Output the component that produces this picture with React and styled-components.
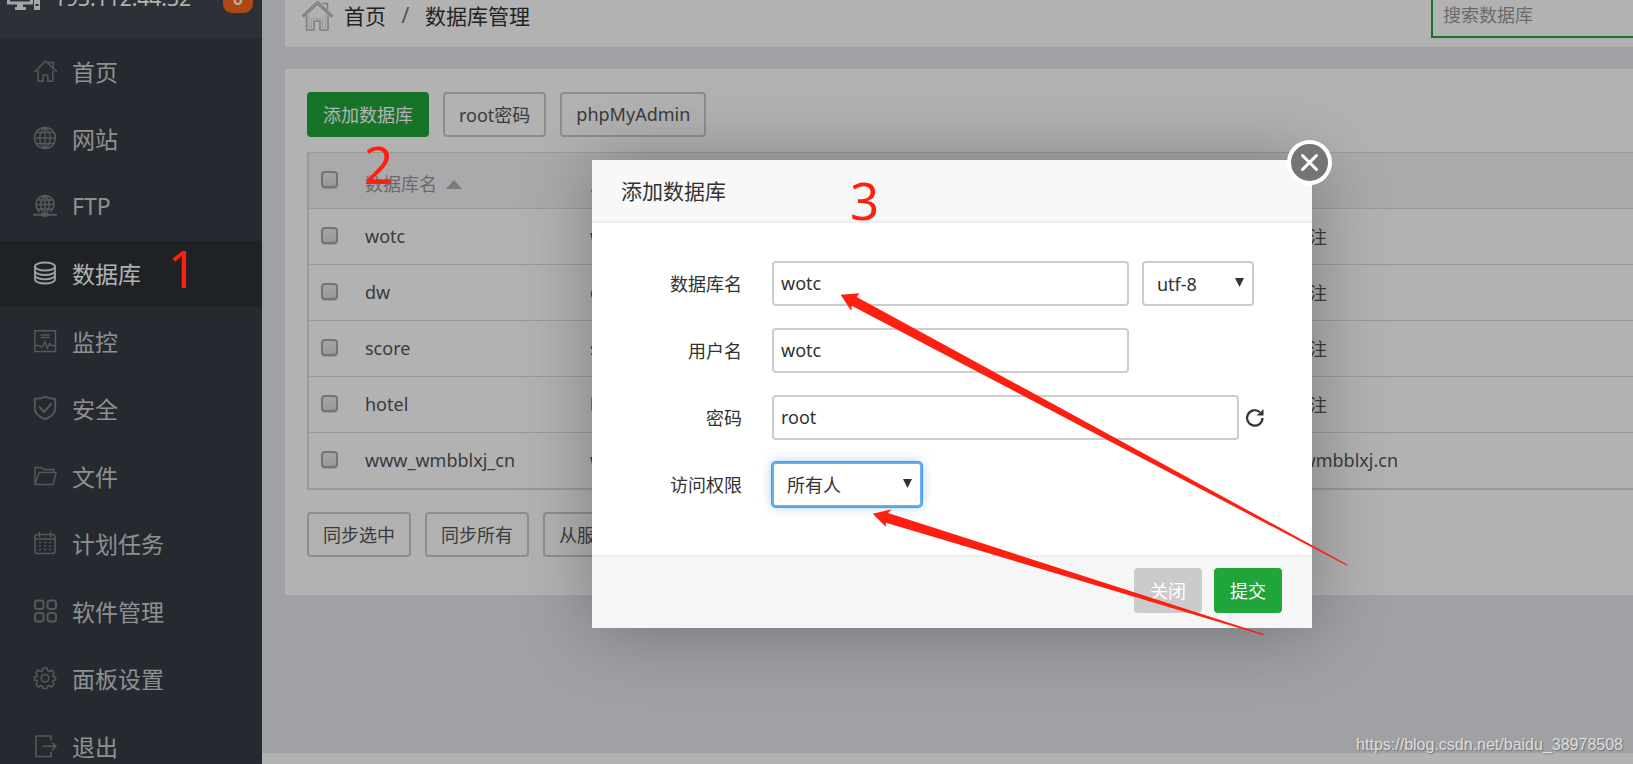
import React from "react";
import styled, { createGlobalStyle, css } from "styled-components";

const GlobalStyle = createGlobalStyle`
  * {
    box-sizing: border-box;
  }
  body {
    margin: 0;
    background-color: #b2b2b2;
  }
  body, button, input, select {
    font-family: "Noto Sans", "Noto Sans CJK SC", sans-serif;
    font-size: 18px;
  }
`;

const Shell = styled.div`
  position: relative;
  height: 100vh;
  overflow: hidden;
  color: #555;
`;
// the page is scrolled down a little, so its top is cut off
const Page = styled.div`
  display: flex;
  height: calc(100vh + 37px);
  margin-top: -37px;
`;

/* ---------- sidebar ---------- */
const Sidebar = styled.aside`
  width: 262px;
  flex-shrink: 0;
  overflow: hidden;
  background-color: #363d47;
`;
const ServerBar = styled.div`
  display: flex;
  align-items: center;
  height: 75px;
  padding: 0 9px 6px 7px;
  background-color: #40474f;
  color: #fff;
  font-size: 21px;
  svg {
    width: 34px;
    height: 28px;
    margin-right: 13px;
  }
`;
const Badge = styled.span`
  margin-left: auto;
  width: 30px;
  border-radius: 9px;
  background-color: #f9691f;
  font-size: 18px;
  font-weight: 600;
  line-height: 30px;
  text-align: center;
`;
const Menu = styled.ul`
  list-style: none;
  margin: 0;
  padding: 1px 0 0;
`;
const MenuItem = styled.li`
  margin-bottom: 1px;
  &:nth-child(even) {
    margin-bottom: 2px;
  }
`;
const MenuLink = styled.a`
  display: flex;
  align-items: center;
  column-gap: 15px;
  height: 66px;
  padding: 0 0 2px 33px;
  color: #cdcdcd;
  font-size: 23px;
  text-decoration: none;
  svg {
    width: 24px;
    height: 24px;
    color: #7c7e80;
  }
  ${(props) =>
    props.$active &&
    css`
      background-color: #2d3136;
      color: #fff;
      svg {
        color: #e6e6e6;
      }
    `};
`;

/* ---------- main ---------- */
const Main = styled.main`
  flex: 1;
  min-width: 0;
  display: flex;
  flex-direction: column;
  row-gap: 22px;
  padding-top: 22px;
  background-color: #e6e7ed;
`;
const TopBar = styled.div`
  display: flex;
  align-items: center;
  height: 62px;
  margin-left: 23px;
  padding: 0 0 2px 15px;
  background-color: white;
  color: #333;
  font-size: 21px;
  svg {
    width: 34px;
    height: 34px;
    margin-right: 10px;
    color: #b4b4b4;
  }
  a {
    color: inherit;
    text-decoration: none;
  }
`;
const Slash = styled.span`
  width: 39px;
  text-align: center;
  color: #777;
`;
const SearchInput = styled.input`
  width: 202px;
  height: 45px;
  margin-left: auto;
  padding: 0 10px;
  border: 2px solid #20a53a;
  border-right: 0;
  outline: none;
  &::placeholder {
    color: #999;
  }
`;
const Card = styled.section`
  margin-left: 23px;
  padding: 23px 0 38px 22px;
  background-color: white;
`;
const ButtonRow = styled.div`
  display: flex;
  column-gap: 14px;
`;
const Button = styled.button`
  height: 45px;
  padding: 0 14px 2px;
  border: 2px solid #ccc;
  border-radius: 4px;
  background-color: transparent;
  color: #555;
  white-space: nowrap;
  ${(props) =>
    props.$primary &&
    css`
      border-color: #20a53a;
      background-color: #20a53a;
      color: #fff;
    `};
  ${(props) =>
    props.$muted &&
    css`
      border-color: #cbcbcb;
      background-color: #cbcbcb;
      color: #fff;
    `};
`;
const Table = styled.table`
  width: 100%;
  margin: 15px 0 22px;
  table-layout: fixed;
  border-spacing: 0;
  border-left: 2px solid #ddd;
  border-bottom: 2px solid #ddd;
  text-align: left;
  th,
  td {
    height: 56px;
    padding: 0 0 2px;
    border-top: 1px solid #ddd;
    font-weight: 400;
    white-space: nowrap;
  }
  th {
    background-color: #f4f4f7;
    color: #999;
    padding: 4px 0 0;
  }
  th:first-child,
  td:first-child {
    width: 56px;
    padding: 0 0 2px 12px;
  }
  th:nth-child(2) {
    width: 225px;
  }
  th:nth-child(3) {
    width: 220px;
  }
  th:nth-child(4) {
    width: 445px;
  }
`;
const Check = styled.input`
  appearance: none;
  display: block;
  width: 17px;
  height: 17px;
  margin: 0;
  border: 2px solid #a6a6a6;
  border-radius: 4px;
  background: linear-gradient(#ededed, #dadada);
  box-shadow: 0 1px 1px rgba(0, 0, 0, 0.15);
`;
const SortMark = styled.span`
  display: inline-block;
  margin-left: 9px;
  vertical-align: 2px;
  border: 8px solid transparent;
  border-top: 0;
  border-bottom: 9px solid #b0b0b0;
`;
const Footer = styled.footer`
  height: 11px;
  margin-top: auto;
  background-color: white;
`;

/* ---------- dialog ---------- */
const Mask = styled.div`
  position: absolute;
  inset: 0;
  background-color: rgba(0, 0, 0, 0.3);
`;
const Dialog = styled.form`
  position: absolute;
  top: 160px;
  left: 592px;
  width: 720px;
  border-radius: 2px;
  background-color: white;
  box-shadow: 2px 2px 75px rgba(0, 0, 0, 0.3);
  color: #333;
`;
const DialogTitle = styled.h2`
  margin: 0;
  padding: 2px 29px 0;
  border-bottom: 2px solid #eee;
  background-color: #f8f8f8;
  font-size: 21px;
  font-weight: 400;
  line-height: 59px;
`;
const CloseButton = styled.button`
  position: absolute;
  top: -20px;
  right: -20px;
  width: 45px;
  height: 45px;
  padding: 0;
  border: 4px solid #fff;
  border-radius: 50%;
  background-color: #757575;
  svg {
    display: block;
    width: 37px;
    height: 37px;
  }
`;
const Fields = styled.div`
  display: flex;
  flex-direction: column;
  row-gap: 22px;
  padding: 38px 0 48px;
`;
const Field = styled.div`
  display: flex;
  align-items: center;
`;
const Label = styled.label`
  width: 150px;
  margin-right: 30px;
  padding-bottom: 2px;
  text-align: right;
`;
const TextInput = styled.input`
  width: ${(props) => (props.$wide ? 467 : 357)}px;
  height: 45px;
  padding: 0 7px 2px;
  border: 2px solid #ccc;
  border-radius: 4px;
  color: #333;
  outline: none;
`;
const SelectWrap = styled.span`
  position: relative;
  display: block;
  svg {
    position: absolute;
    top: 17px;
    right: 10px;
    width: 9px;
    height: 9px;
    pointer-events: none;
  }
`;
const Select = styled.select`
  appearance: none;
  display: block;
  width: ${(props) => props.$width}px;
  height: 45px;
  padding: 0 13px;
  border: 2px solid #ccc;
  border-radius: 4px;
  background-color: white;
  color: #333;
  outline: none;
  ${(props) =>
    props.$focused &&
    css`
      border-color: #66afe9;
      box-shadow: 0 0 0 1px #4d90fe, 0 0 12px rgba(102, 175, 233, 0.6);
    `};
`;
const CharsetWrap = styled.div`
  margin-left: 13px;
`;
const Refresh = styled.button`
  width: 20px;
  height: 20px;
  margin-left: 6px;
  padding: 0;
  border: 0;
  background: none;
  svg {
    display: block;
    width: 20px;
    height: 20px;
  }
`;
const DialogFooter = styled.div`
  display: flex;
  justify-content: flex-end;
  column-gap: 12px;
  padding: 11px 30px 15px;
  border-top: 2px solid #edf0f0;
  background-color: #f5f7f7;
`;

/* ---------- notes drawn over the page ---------- */
const Arrows = styled.svg`
  position: absolute;
  inset: 0;
  width: 100%;
  height: 100%;
  pointer-events: none;
`;
const Mark = styled.span`
  position: absolute;
  left: ${(props) => props.$x}px;
  top: ${(props) => props.$y}px;
  color: #ff1f10;
  font-size: 51px;
  line-height: 52px;
  pointer-events: none;
`;
const Watermark = styled.span`
  position: absolute;
  right: 10px;
  bottom: 9px;
  color: #dedede;
  font-family: "Liberation Sans", sans-serif;
  font-size: 16px;
  line-height: 20px;
  text-shadow: 1px 1px 1px rgba(0, 0, 0, 0.3);
`;

const Icon = ({ children, width = 1.5, box = "0 0 24 24" }) => (
  <svg
    viewBox={box}
    fill="none"
    stroke="currentColor"
    strokeWidth={width}
    strokeLinecap="round"
    strokeLinejoin="round"
    aria-hidden="true"
  >
    {children}
  </svg>
);

const HomeIcon = () => (
  <Icon width={1.5}>
    <path d="M2 12.5 12.6 2 23.4 12.5M15.5 3.6h4.8v5.6M5.2 12v10.3h5v-6.4h4.6v6.4h5V12" />
  </Icon>
);
const CrumbHomeIcon = () => (
  <Icon width={1.5} box="0 0 34 34">
    <path d="M2.5 17.5 17.5 3.5 32.5 17.5l-1.2 1.2L17.5 6 3.7 18.7zM23 5.500h4.500v5M6.5 18v14h7.500v-9h6v9h8V18" />
    <path d="M9 17v12.500h2.500v-9h11v9h3V17" strokeWidth="1" opacity=".45" />
  </Icon>
);
const GlobeIcon = () => (
  <Icon width={1.4}>
    <circle cx="12" cy="12" r="10.5" />
    <path d="M12 1.5v21M1.5 12h21M3.5 6.5h17M3.5 17.5h17M12 1.5c-7 5.5-7 15.5 0 21M12 1.5c7 5.5 7 15.5 0 21" />
  </Icon>
);
const FtpIcon = () => (
  <Icon width={1.5}>
    <path d="M6.5 17.5a9 9 0 1 1 11 0M12 1.5v17M3 10.5h18M4.5 6h15M4.5 15h15M12 1.5c-5 4.5-5.5 11-2.5 16M12 1.5c5 4.5 5.5 11 2.5 16" />
    <path d="M.5 20.7h23" strokeWidth="2" />
    <path d="M10 20.7h4" strokeWidth="4" />
  </Icon>
);
const DatabaseIcon = () => (
  <Icon width={1.8}>
    <ellipse cx="12" cy="5.5" rx="10" ry="4" />
    <path d="M2 5.500v13c0 2.200 4.500 4 10 4s10-1.800 10-4v-13M2 10c0 2.200 4.500 4 10 4s10-1.800 10-4M2 14.300c0 2.200 4.500 4 10 4s10-1.800 10-4" />
  </Icon>
);
const MonitorIcon = () => (
  <Icon width={1.4}>
    <path d="M1.8 1.8h20.7v20.7H1.8zM8 6h8M8 8.500h8M3 16.500h3l2 1.500 2-1 2-4.500 2.500 7 2-5 1.500 2H22" />
  </Icon>
);
const ShieldIcon = () => (
  <Icon width={1.9}>
    <path d="M12 .8c3 1.400 6.500 2 10.200 2v9.500c0 5-4.200 8.700-10.200 11-6-2.300-10.200-6-10.200-11V2.800C5.500 2.800 9 2.200 12 .8zM6.500 11l4.500 5 7-8" />
  </Icon>
);
const FolderIcon = () => (
  <Icon width={1.4}>
    <path d="M2 20.500V3.500h6l2.500 2h10.200v3M2 20.500h18l3.200-12H6z" />
  </Icon>
);
const CalendarIcon = () => (
  <Icon width={1.5}>
    <path d="M4.500 3.500h15a2.500 2.500 0 0 1 2.500 2.500v14a2.500 2.500 0 0 1-2.500 2.500h-15A2.500 2.500 0 0 1 2 20V6a2.500 2.500 0 0 1 2.500-2.500zM2 8h20M6.500 1.500v4M17.500 1.500v4" />
    <path d="M6.500 11.500h1M11.500 11.500h1M16.500 11.500h1M6.500 15h1M11.500 15h1M16.500 15h1M6.500 18.500h1M11.500 18.500h1M16.500 18.500h1" />
  </Icon>
);
const GridIcon = () => (
  <Icon width={2}>
    <rect x="2" y="1.5" width="8.5" height="8.5" rx="2.5" />
    <rect x="14.5" y="1.5" width="8.5" height="8.5" rx="2.5" />
    <rect x="2" y="14" width="8.5" height="8.5" rx="2.5" />
    <rect x="14.5" y="14" width="8.5" height="8.5" rx="2.5" />
  </Icon>
);
const GearIcon = () => (
  <Icon width={1.5}>
    <path d="M10 2h4l.7 2.800 1.500.7L19 4l2 3-1.300 2.500.5 1.200 2.300.3v3l-2.300.6-.6 1.300L21 18.500 18.500 21l-2.600-1.500-1.400.6L14 22.500h-4l-.6-2.400-1.400-.6L5.500 21 3 18.500l1.400-2.600-.6-1.300L1.500 14v-3l2.300-.5.5-1.200L3 7l2-3 2.800 1.500 1.500-.7z" />
    <circle cx="12" cy="12.3" r="3.8" />
  </Icon>
);
const ExitIcon = () => (
  <Icon width={1.6}>
    <path d="M18 6V2H3v20.500h15v-4M10 12.300h12.500M19.500 9l3.500 3.300-3.500 3.300" />
  </Icon>
);

const menu = [
  { text: "首页", icon: <HomeIcon /> },
  { text: "网站", icon: <GlobeIcon /> },
  { text: "FTP", icon: <FtpIcon /> },
  { text: "数据库", icon: <DatabaseIcon />, active: true },
  { text: "监控", icon: <MonitorIcon /> },
  { text: "安全", icon: <ShieldIcon /> },
  { text: "文件", icon: <FolderIcon /> },
  { text: "计划任务", icon: <CalendarIcon /> },
  { text: "软件管理", icon: <GridIcon /> },
  { text: "面板设置", icon: <GearIcon /> },
  { text: "退出", icon: <ExitIcon /> },
];

const databases = [
  { name: "wotc", note: "填写备注" },
  { name: "dw", note: "填写备注" },
  { name: "score", note: "填写备注" },
  { name: "hotel", note: "填写备注" },
  { name: "www_wmbblxj_cn", note: "www.wmbblxj.cn" },
];

const DownArrow = () => (
  <svg viewBox="0 0 10 10" aria-hidden="true">
    <path d="M0 0h10L5 10z" fill="#333" />
  </svg>
);

const AddDatabase = () => (
  <Dialog onSubmit={(e) => e.preventDefault()}>
    <DialogTitle>添加数据库</DialogTitle>
    <CloseButton type="button" aria-label="关闭">
      <svg viewBox="0 0 37 37" stroke="#fff" strokeWidth="3" strokeLinecap="round">
        <path d="M11.5 11.5l14 14M25.5 11.5l-14 14" />
      </svg>
    </CloseButton>
    <Fields>
      <Field>
        <Label htmlFor="name">数据库名</Label>
        <TextInput id="name" defaultValue="wotc" />
        <CharsetWrap>
          <SelectWrap>
            <Select $width={112} aria-label="utf-8">
              <option>utf-8</option>
            </Select>
            <DownArrow />
          </SelectWrap>
        </CharsetWrap>
      </Field>
      <Field>
        <Label htmlFor="user">用户名</Label>
        <TextInput id="user" defaultValue="wotc" />
      </Field>
      <Field>
        <Label htmlFor="password">密码</Label>
        <TextInput id="password" $wide defaultValue="root" />
        <Refresh type="button" aria-label="密码">
          <svg viewBox="0 0 20 20" aria-hidden="true">
            <path d="M17.5 10a7.700 7.700 0 1 1-2.600-5.800" fill="none" stroke="#333" strokeWidth="2.2" />
            <path d="M18.5 1v6.500H11.500l3-2.500z" fill="#333" />
          </svg>
        </Refresh>
      </Field>
      <Field>
        <Label htmlFor="access">访问权限</Label>
        <SelectWrap>
          <Select id="access" $width={150} $focused>
            <option>所有人</option>
          </Select>
          <DownArrow />
        </SelectWrap>
      </Field>
    </Fields>
    <DialogFooter>
      <Button type="button" $muted>关闭</Button>
      <Button type="submit" $primary>提交</Button>
    </DialogFooter>
  </Dialog>
);

const App = () => {
  return (
    <Shell>
      <GlobalStyle />
      <Page>
        <Sidebar>
          <ServerBar>
            <svg viewBox="0 0 34 28" aria-hidden="true">
              <path d="M1.5 2h23v17h-23z" fill="none" stroke="#eee" strokeWidth="3" />
              <path d="M10 20h6v3h3v3H8v-3h2zM27 0h6v26h-6z" fill="#eee" />
              <path d="M28.5 21h3" stroke="#40474f" strokeWidth="2" />
            </svg>
            <span>193.112.44.32</span>
            <Badge>0</Badge>
          </ServerBar>
          <nav>
            <Menu>
              {menu.map((item) => (
                <MenuItem key={item.text}>
                  <MenuLink href="#" $active={item.active}>
                    {item.icon}
                    <span>{item.text}</span>
                  </MenuLink>
                </MenuItem>
              ))}
            </Menu>
          </nav>
        </Sidebar>
        <Main>
          <TopBar>
            <CrumbHomeIcon />
            <a href="#">首页</a>
            <Slash>/</Slash>
            <span>数据库管理</span>
            <SearchInput placeholder="搜索数据库" aria-label="搜索数据库" />
          </TopBar>
          <Card>
            <ButtonRow>
              <Button $primary>添加数据库</Button>
              <Button>root密码</Button>
              <Button>phpMyAdmin</Button>
            </ButtonRow>
            <Table>
              <thead>
                <tr>
                  <th>
                    <Check type="checkbox" aria-label="数据库名" />
                  </th>
                  <th>
                    数据库名
                    <SortMark />
                  </th>
                  <th>用户名</th>
                  <th>密码</th>
                  <th>备注</th>
                </tr>
              </thead>
              <tbody>
                {databases.map((db) => (
                  <tr key={db.name}>
                    <td>
                      <Check type="checkbox" aria-label={db.name} />
                    </td>
                    <td>{db.name}</td>
                    <td>{db.name}</td>
                    <td>**********</td>
                    <td>{db.note}</td>
                  </tr>
                ))}
              </tbody>
            </Table>
            <ButtonRow>
              <Button>同步选中</Button>
              <Button>同步所有</Button>
              <Button>从服务器获取</Button>
            </ButtonRow>
          </Card>
          <Footer />
        </Main>
      </Page>
      <Mask />
      <AddDatabase />
      <Arrows aria-hidden="true" fill="#ff1f10">
        <path d="M840.7 294.7 859.5 293.3 856.7 297 1347.7 564.7 1347 565.8 851.7 305.7 851.3 311z" />
        <path d="M872.7 513.7 891.7 509.3 888 513 1263.8 634 1263.3 635.2 886 522.7 885.7 526.7z" />
      </Arrows>
      <Mark $x={168} $y={242}>1</Mark>
      <Mark $x={364} $y={138}>2</Mark>
      <Mark $x={850} $y={174}>3</Mark>
      <Watermark>https://blog.csdn.net/baidu_38978508</Watermark>
    </Shell>
  );
};

export default App;
